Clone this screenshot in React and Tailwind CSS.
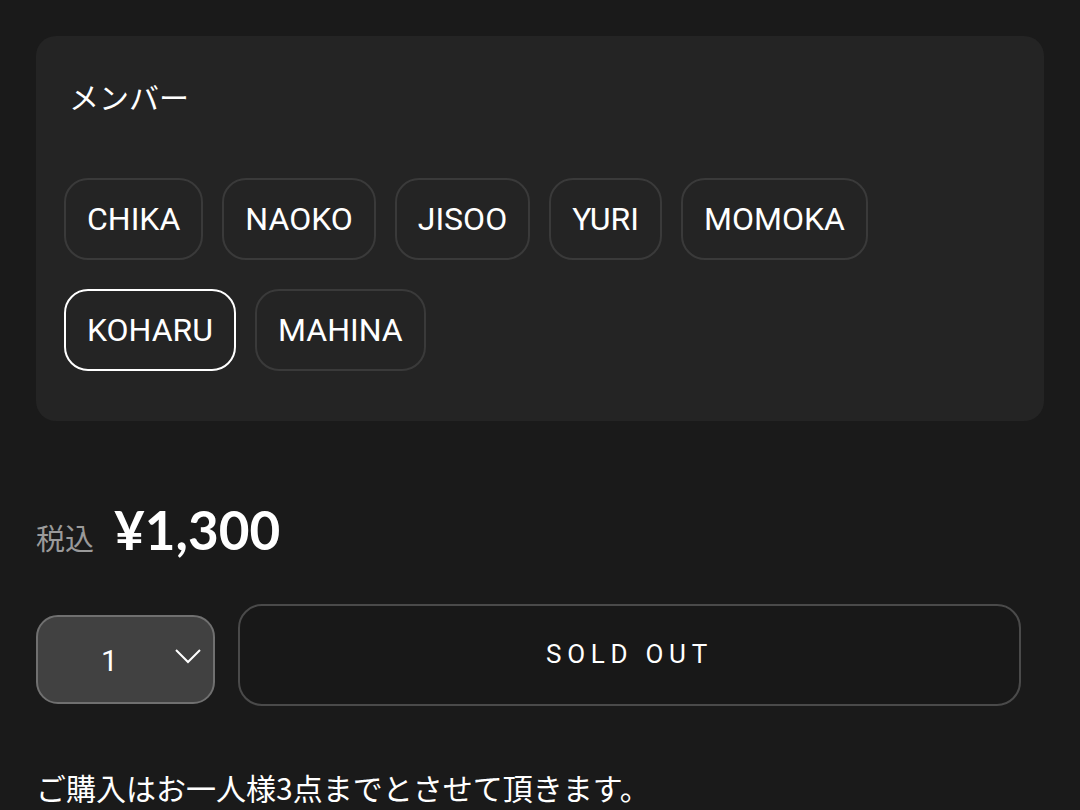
import React from 'react';

const members = ['CHIKA', 'NAOKO', 'JISOO', 'YURI', 'MOMOKA', 'KOHARU', 'MAHINA'];

const App = () => {
  const [selected, setSelected] = React.useState('KOHARU');

  return (
    <div
      className="min-h-[810px] bg-[#1a1a1a] text-white px-[36px] pt-[36px] overflow-hidden"
      style={{ fontFamily: 'Roboto, "Noto Sans CJK JP", sans-serif' }}
    >
      {/* Member selector */}
      <div className="bg-[#242424] rounded-[20px] px-[28px] pt-[46px] pb-[50px]">
        <h2 className="text-[30px] leading-[34px] font-normal ml-[5px]">メンバー</h2>
        <div className="mt-[62px] flex flex-wrap gap-x-[19px] gap-y-[29px] pr-[120px]">
          {members.map((m) => (
            <button
              key={m}
              onClick={() => setSelected(m)}
              className={`h-[82px] px-[21px] rounded-[24px] border-2 text-[32px] leading-none ${
                selected === m ? 'border-white' : 'border-[#3a3a3a]'
              }`}
            >
              {m}
            </button>
          ))}
        </div>
      </div>

      {/* Price */}
      <div className="mt-[82px] flex items-baseline gap-[20px]">
        <span className="text-[29px] text-[#9a9a9a]" style={{ fontFamily: '"Noto Sans CJK JP", sans-serif' }}>税込</span>
        <span className="text-[53px] font-bold leading-none" style={{ fontFamily: 'Lato, sans-serif' }}>¥1,300</span>
      </div>

      {/* Quantity + button */}
      <div className="mt-[44px] flex items-start gap-[23px] pr-[23px]">
        <div className="w-[179px] h-[89px] shrink-0 bg-[#414141] border-2 border-[#707070] rounded-[22px] flex items-center mt-[11px]">
          <span className="text-[30px] ml-[63px] mt-[2px]">1</span>
          <svg className="ml-auto mr-[11px] mt-[-6px]" width="28" height="16" viewBox="0 0 28 16" fill="none" stroke="white" strokeWidth="2">
            <path d="M2 2l12 12L26 2" />
          </svg>
        </div>
        <button className="flex-1 h-[102px] border-2 border-[#4a4a4a] rounded-[24px] bg-[#181818] text-[26px] tracking-[0.22em]">
          SOLD OUT
        </button>
      </div>

      <p className="mt-[66px] text-[30px] leading-none" style={{ fontFamily: '"Noto Sans CJK JP", sans-serif' }}>
        ご購入はお一人様3点までとさせて頂きます。
      </p>
    </div>
  );
};

export default App;
